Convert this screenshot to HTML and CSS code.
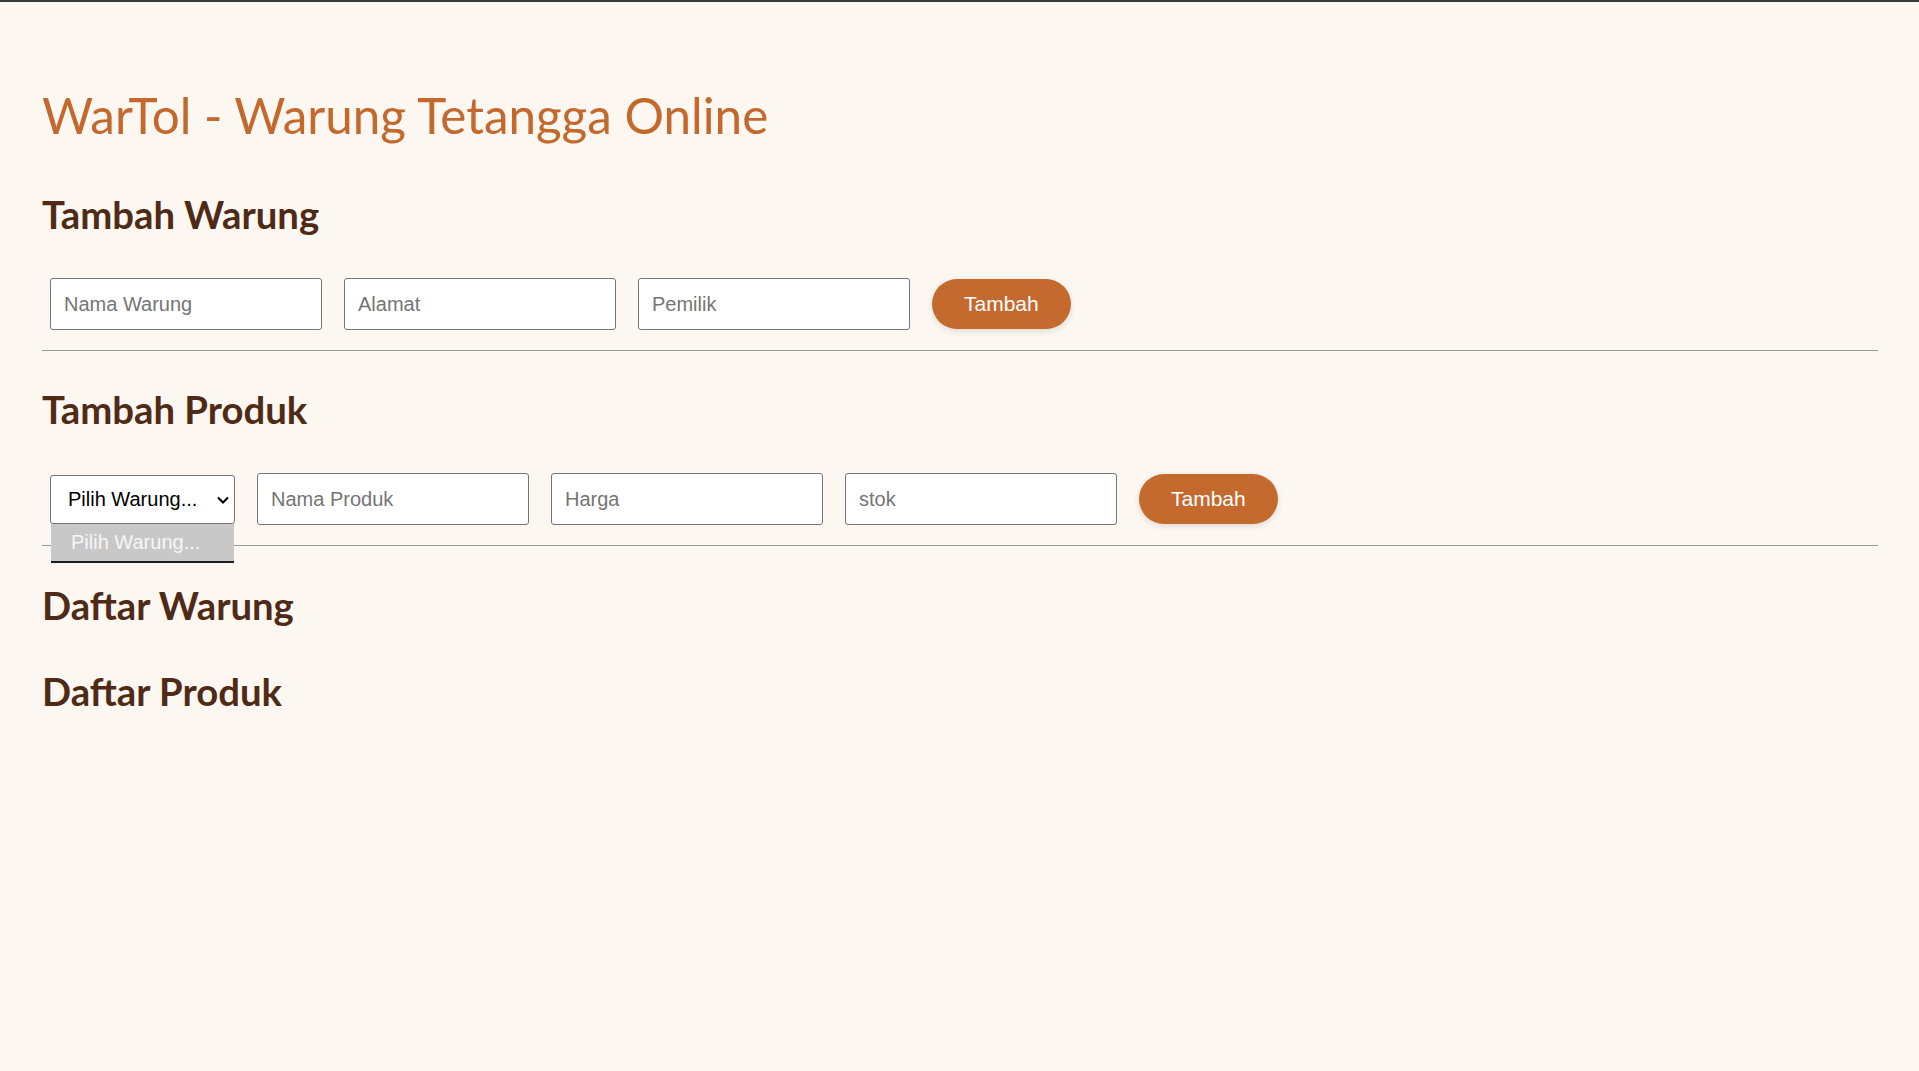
FILE: index.html
```html
<!DOCTYPE html>
<html lang="id">
<head>
    <meta charset="UTF-8">
    <meta name="viewport" content="width=device-width, initial-scale=1.0">
    <title>WarTol - Warung Tetangga Online</title>
    <link rel="stylesheet" href="styles.css">
</head>
<body>
    <h1>WarTol - Warung Tetangga Online</h1>

    <h2>Tambah Warung</h2>
    <div class="form-row">
        <input type="text" id="namaWarung" placeholder="Nama Warung">
        <input type="text" id="alamat" placeholder="Alamat">
        <input type="text" id="pemilik" placeholder="Pemilik">
        <button class="btn">Tambah</button>
    </div>
    <hr>

    <h2>Tambah Produk</h2>
    <div class="form-row">
        <div class="select-wrap">
            <select id="pilihWarung">
                <option>Pilih Warung...</option>
            </select>
            <svg class="chevron" width="12" height="8" viewBox="0 0 12 8">
                <path d="M1 1.5 L6 6.5 L11 1.5" fill="none" stroke="#000" stroke-width="2"/>
            </svg>
            <!-- dropdown terbuka -->
            <div class="dropdown">Pilih Warung...</div>
        </div>
        <input type="text" id="namaProduk" placeholder="Nama Produk">
        <input type="text" id="harga" placeholder="Harga">
        <input type="text" id="stok" placeholder="stok">
        <button class="btn">Tambah</button>
    </div>
    <hr>

    <h2 class="list-title">Daftar Warung</h2>
    <div id="daftarWarung"></div>

    <h2 class="list-title">Daftar Produk</h2>
    <div id="daftarProduk"></div>
</body>
</html>
```

FILE: styles.css
```css
body {
    margin: 0;
    padding: 0 41px 0 42px;
    border-top: 2px solid #3a3a3a;
    background: #fcf7f0;
    font-family: Lato, "Open Sans", sans-serif;
    min-height: 1069px;
    box-sizing: border-box;
}

h1 {
    color: #c4692e;
    font-size: 49.4px;
    font-weight: 400;
    margin: 83px 0 46px;
}

h2 {
    color: #4f2b17;
    font-size: 38.3px;
    font-weight: 700;
    margin: 35px 0 41px;
}

.list-title {
    margin: 36px 0 40px;
}

.form-row {
    display: flex;
    align-items: center;
    gap: 22px;
    padding-left: 8px;
}

input {
    box-sizing: border-box;
    width: 272px;
    height: 52px;
    padding: 0 13px;
    border: 1px solid #767676;
    border-radius: 3px;
    background: #fff;
    font-family: "Liberation Sans", Arial, sans-serif;
    font-size: 20px;
    color: #222;
}

input::placeholder {
    color: #757575;
}

.select-wrap {
    position: relative;
    display: flex;
}

select {
    appearance: none;
    -webkit-appearance: none;
    box-sizing: border-box;
    width: 185px;
    height: 49px;
    padding: 0 24px 0 17px;
    border: 1px solid #767676;
    border-radius: 3px;
    background: #fff;
    color: #000;
    font-family: "Liberation Sans", Arial, sans-serif;
    font-size: 20px;
}

.chevron {
    position: absolute;
    top: 21px;
    right: 6px;
    pointer-events: none;
}

.dropdown {
    position: absolute;
    top: 100%;
    left: 1px;
    width: 183px;
    height: 39px;
    box-sizing: border-box;
    padding-left: 20px;
    line-height: 36px;
    background: #c8c8c8;
    border-bottom: 2px solid #1e1e1e;
    color: #f6f6f6;
    font-family: "Liberation Sans", Arial, sans-serif;
    font-size: 20px;
}

.btn {
    height: 50px;
    padding: 0 32px;
    border: none;
    border-radius: 25px;
    background: #c46a2e;
    color: #fff;
    font-family: "Liberation Sans", Arial, sans-serif;
    font-size: 21px;
    cursor: pointer;
    box-shadow: 0 2px 6px rgba(0, 0, 0, 0.12);
}

.btn:hover {
    background: #a9581f;
}

hr {
    margin: 20px 0 0;
    border: 0;
    border-top: 1px solid #999;
}
```
